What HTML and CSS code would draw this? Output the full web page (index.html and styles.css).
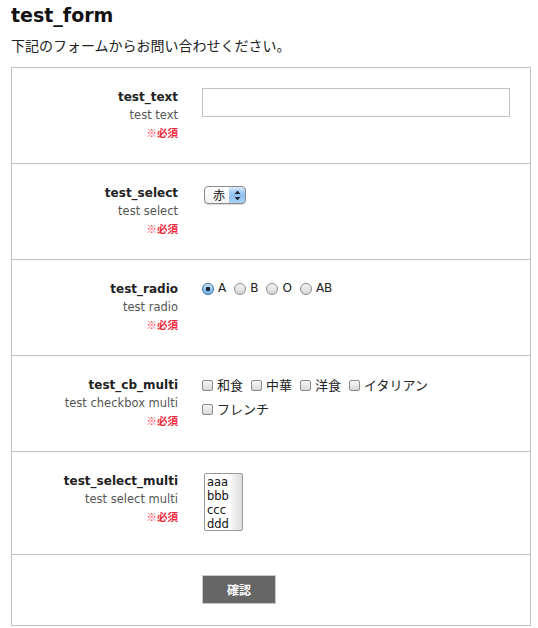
FILE: index.html
```html
<!DOCTYPE html>
<html lang="ja">
<head>
  <meta charset="UTF-8" />
  <meta name="viewport" content="width=device-width, initial-scale=1.0" />
  <title>test_form</title>
  <link rel="stylesheet" href="styles.css">
</head>
<body>
  <h1>test_form</h1>
  <p class="lead">下記のフォームからお問い合わせください。</p>

  <form class="form">
    <div class="row">
      <div class="label">
        <span class="name">test_text</span>
        <span class="desc">test text</span>
        <span class="req">※必須</span>
      </div>
      <div class="field">
        <input type="text" class="text" />
      </div>
    </div>

    <div class="row">
      <div class="label">
        <span class="name">test_select</span>
        <span class="desc">test select</span>
        <span class="req">※必須</span>
      </div>
      <div class="field">
        <span class="select-wrap">
          <select class="select">
            <option>赤</option>
            <option>青</option>
            <option>黄</option>
          </select>
          <svg class="arrows" width="7" height="11" viewBox="0 0 7 11">
            <path d="M3.5 0.5 L6.5 4 L0.5 4 Z M0.5 7 L6.5 7 L3.5 10.5 Z" fill="#1e2a3a"/>
          </svg>
        </span>
      </div>
    </div>

    <div class="row">
      <div class="label">
        <span class="name">test_radio</span>
        <span class="desc">test radio</span>
        <span class="req">※必須</span>
      </div>
      <div class="field options">
        <label class="opt"><input type="radio" name="blood" checked /> A</label>
        <label class="opt"><input type="radio" name="blood" /> B</label>
        <label class="opt"><input type="radio" name="blood" /> O</label>
        <label class="opt"><input type="radio" name="blood" /> AB</label>
      </div>
    </div>

    <div class="row">
      <div class="label">
        <span class="name">test_cb_multi</span>
        <span class="desc">test checkbox multi</span>
        <span class="req">※必須</span>
      </div>
      <div class="field options checks">
        <label class="opt"><input type="checkbox" /> 和食</label>
        <label class="opt"><input type="checkbox" /> 中華</label>
        <label class="opt"><input type="checkbox" /> 洋食</label>
        <label class="opt"><input type="checkbox" /> イタリアン</label>
        <label class="opt"><input type="checkbox" /> フレンチ</label>
      </div>
    </div>

    <div class="row row-multi">
      <div class="label">
        <span class="name">test_select_multi</span>
        <span class="desc">test select multi</span>
        <span class="req">※必須</span>
      </div>
      <div class="field">
        <select class="multi" multiple size="4">
          <option>aaa</option>
          <option>bbb</option>
          <option>ccc</option>
          <option>ddd</option>
        </select>
      </div>
    </div>

    <div class="row row-submit">
      <div class="label"></div>
      <div class="field">
        <button type="button" class="submit">確認</button>
      </div>
    </div>
  </form>
</body>
</html>
```

FILE: styles.css
```css
* {
  box-sizing: border-box;
}

html,
body {
  overflow: hidden;
}

body {
  margin: 0 0 0 11px;
  font-family: "DejaVu Sans", "Noto Sans CJK JP", sans-serif;
  color: #222;
  background: #fff;
}

h1 {
  margin: 0;
  padding-top: 2px;
  font-size: 19px;
  line-height: 26px;
  font-weight: bold;
  color: #111;
}

.lead {
  margin: 8px 0 0;
  font-family: "Noto Sans CJK JP", sans-serif;
  font-size: 14px;
  line-height: 18px;
  color: #222;
}

.form {
  margin-top: 13px;
  width: 520px;
  border: 1px solid #c2c2c2;
}

.row {
  display: grid;
  grid-template-columns: 166px 1fr;
  column-gap: 24px;
  padding: 20px 0 22px;
  border-bottom: 1px solid #c2c2c2;
}

.row:last-child {
  border-bottom: none;
}

.label {
  display: flex;
  flex-direction: column;
  align-items: flex-end;
  text-align: right;
}

.name {
  font-size: 12px;
  line-height: 18px;
  font-weight: bold;
  color: #222;
}

.desc {
  font-size: 11.5px;
  line-height: 18px;
  color: #555;
}

.req {
  font-family: "Noto Sans CJK JP", sans-serif;
  font-size: 10.5px;
  line-height: 17px;
  font-weight: bold;
  color: #f0283c;
}

.text {
  display: block;
  width: 308px;
  height: 29px;
  margin: 0;
  border: 1px solid #c2c2c2;
  background: #fff;
}

/* select */
.select-wrap {
  position: relative;
  display: inline-block;
  margin: 2px 0 0 2px;
}

.select {
  appearance: none;
  -webkit-appearance: none;
  display: block;
  width: 42px;
  height: 18px;
  padding: 0 0 0 8px;
  border: 1px solid #8a8a8a;
  border-radius: 4px;
  font-family: "Noto Sans CJK JP", sans-serif;
  font-size: 12px;
  line-height: 16px;
  color: #111;
  background:
    linear-gradient(#d8eafc, #8dc0f2 50%, #a9d2f8) right / 16px 100% no-repeat,
    linear-gradient(#fff, #f2f2f2);
  box-shadow: 0 1px 1px rgba(0, 0, 0, 0.15);
}

.arrows {
  position: absolute;
  right: 5px;
  top: 4px;
  pointer-events: none;
}

/* radio / checkbox */
.options {
  display: flex;
  flex-wrap: wrap;
  align-content: flex-start;
  column-gap: 8px;
  row-gap: 8px;
  padding-top: 1px;
}

.checks {
  max-width: 280px;
}

.opt {
  display: flex;
  align-items: center;
  gap: 4px;
  font-size: 12px;
  line-height: 15px;
  color: #222;
}

.checks .opt {
  font-family: "Noto Sans CJK JP", sans-serif;
  font-size: 13px;
  line-height: 16px;
}

.opt input {
  appearance: none;
  -webkit-appearance: none;
  margin: 0;
  flex: none;
}

.opt input[type="radio"] {
  width: 12px;
  height: 12px;
  border: 1px solid #8c8c8c;
  border-radius: 50%;
  background: linear-gradient(#f4f4f4, #d6d6d6);
}

.opt input[type="radio"]:checked {
  border-color: #3d6aa3;
  background:
    radial-gradient(circle, #1b2636 0 2px, transparent 2.6px),
    linear-gradient(#cfe6fb, #6aaeee);
}

.opt input[type="checkbox"] {
  width: 11px;
  height: 11px;
  border: 1px solid #8c8c8c;
  border-radius: 2px;
  background: linear-gradient(#f6f6f6, #d8d8d8);
}

/* multi select */
.row-multi {
  padding-bottom: 23px;
}

.multi {
  appearance: none;
  -webkit-appearance: none;
  display: block;
  width: 39px;
  height: 58px;
  margin: 1px 0 0 2px;
  padding: 1px 0;
  border: 1px solid #999;
  overflow: hidden;
  font-family: "DejaVu Sans", sans-serif;
  font-size: 11.5px;
  line-height: 14px;
  color: #111;
  background: linear-gradient(to right, #fff 0 26px, #f7f7f7 26px, #dcdcdc);
}

.multi option {
  padding: 0 2px;
  line-height: 14px;
}

/* submit */
.row-submit {
  padding: 20px 0 21px;
}

.submit {
  display: block;
  width: 74px;
  height: 29px;
  margin: 0;
  border: 1px solid #c8c8c8;
  background: #666;
  color: #fff;
  font-family: "Noto Sans CJK JP", sans-serif;
  font-size: 12px;
  font-weight: bold;
  cursor: pointer;
}
```
